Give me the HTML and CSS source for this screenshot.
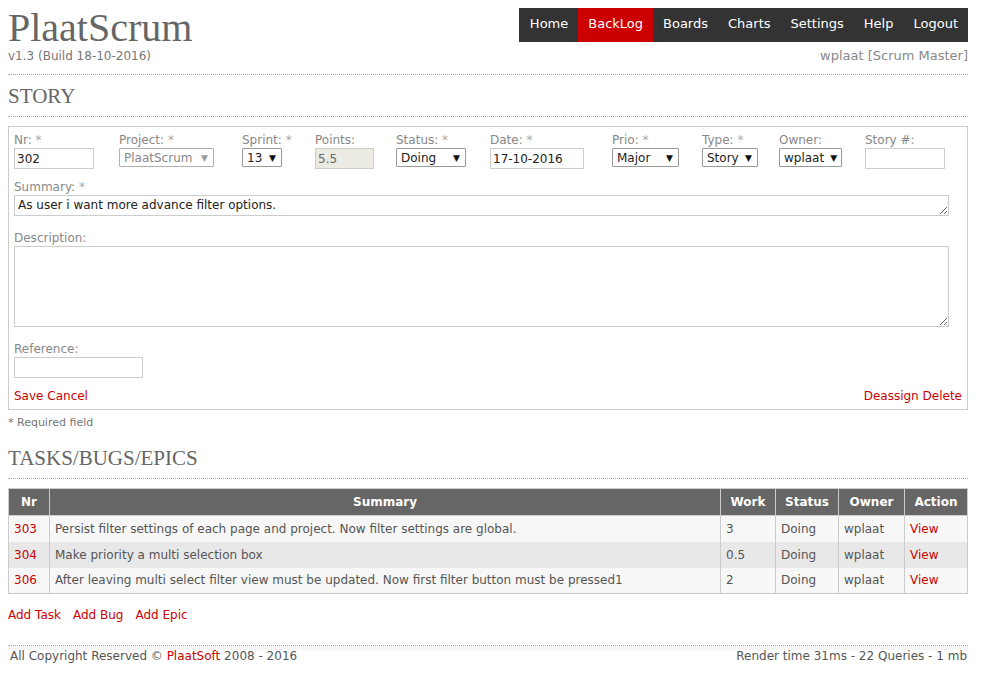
FILE: index.html
```html
<!DOCTYPE html>
<html>
<head>
<meta charset="utf-8">
<title>PlaatScrum</title>
<link rel="stylesheet" href="styles.css">
</head>
<body>
<div class="header">
  <div class="brand">
    <h1 class="title">PlaatScrum</h1>
    <div class="version">v1.3 (Build 18-10-2016)</div>
  </div>
  <div class="right">
    <ul class="nav">
      <li><a href="#">Home</a></li>
      <li class="active"><a href="#">BackLog</a></li>
      <li><a href="#">Boards</a></li>
      <li><a href="#">Charts</a></li>
      <li><a href="#">Settings</a></li>
      <li><a href="#">Help</a></li>
      <li><a href="#">Logout</a></li>
    </ul>
    <div class="user">wplaat [Scrum Master]</div>
  </div>
</div>
<div class="hr hr-top"></div>
<h2 class="section">STORY</h2>
<div class="hr"></div>

<div class="box">
  <div class="fields">
    <div class="field w-nr"><label>Nr: <span class="req">*</span></label><input class="in in-nr" value="302"></div>
    <div class="field w-project"><label>Project: <span class="req">*</span></label><span class="sel sel-dis s-project">PlaatScrum<span class="arr">▼</span></span></div>
    <div class="field w-sprint"><label>Sprint: <span class="req">*</span></label><span class="sel s-sprint">13<span class="arr">▼</span></span></div>
    <div class="field w-points"><label>Points:</label><input class="in in-points" value="5.5" disabled></div>
    <div class="field w-status"><label>Status: <span class="req">*</span></label><span class="sel s-status">Doing<span class="arr">▼</span></span></div>
    <div class="field w-date"><label>Date: <span class="req">*</span></label><input class="in in-date" value="17-10-2016"></div>
    <div class="field w-prio"><label>Prio: <span class="req">*</span></label><span class="sel s-prio">Major<span class="arr">▼</span></span></div>
    <div class="field w-type"><label>Type: <span class="req">*</span></label><span class="sel s-type">Story<span class="arr">▼</span></span></div>
    <div class="field w-owner"><label>Owner:</label><span class="sel s-owner">wplaat<span class="arr">▼</span></span></div>
    <div class="field w-story"><label>Story #:</label><input class="in in-story" value=""></div>
  </div>
  <div class="block">
    <label>Summary: <span class="req">*</span></label>
    <textarea class="in ta-summary">As user i want more advance filter options.</textarea>
  </div>
  <div class="block after-ta">
    <label>Description:</label>
    <textarea class="in ta-desc"></textarea>
  </div>
  <div class="block after-ta">
    <label>Reference:</label>
    <input class="in in-ref" value="">
  </div>
  <div class="actions">
    <div><a href="#">Save</a> <a href="#">Cancel</a></div>
    <div><a href="#">Deassign</a> <a href="#">Delete</a></div>
  </div>
</div>
<div class="note">* Required field</div>

<h2 class="section sec2">TASKS/BUGS/EPICS</h2>
<div class="hr"></div>

<table class="grid">
  <thead>
    <tr><th class="c-nr">Nr</th><th>Summary</th><th class="c-work">Work</th><th class="c-status">Status</th><th class="c-owner">Owner</th><th class="c-action">Action</th></tr>
  </thead>
  <tbody>
    <tr class="odd"><td><a href="#">303</a></td><td>Persist filter settings of each page and project. Now filter settings are global.</td><td>3</td><td>Doing</td><td>wplaat</td><td><a href="#">View</a></td></tr>
    <tr class="even"><td><a href="#">304</a></td><td>Make priority a multi selection box</td><td>0.5</td><td>Doing</td><td>wplaat</td><td><a href="#">View</a></td></tr>
    <tr class="odd"><td><a href="#">306</a></td><td>After leaving multi select filter view must be updated. Now first filter button must be pressed1</td><td>2</td><td>Doing</td><td>wplaat</td><td><a href="#">View</a></td></tr>
  </tbody>
</table>

<div class="adds"><a href="#">Add Task</a><a href="#">Add Bug</a><a href="#">Add Epic</a></div>

<div class="hr hr-foot"></div>
<div class="footer">
  <div>All Copyright Reserved © <a href="#">PlaatSoft</a> 2008 - 2016</div>
  <div>Render time 31ms - 22 Queries - 1 mb</div>
</div>
</body>
</html>
```

FILE: styles.css
```css
* { box-sizing: border-box; }
body {
  margin: 8px 16px 8px 8px;
  font-family: "DejaVu Sans", Verdana, sans-serif;
  font-size: 12px;
  color: #555;
  background: #fff;
}
a { color: #cc0000; text-decoration: none; }

.header { display: flex; justify-content: space-between; align-items: flex-start; }
.title {
  margin: 0;
  font-family: "Liberation Serif", Georgia, serif;
  font-weight: normal;
  font-size: 40px;
  line-height: 40px;
  color: #666;
}
.version { font-size: 12px; color: #777; margin-top: 1px; }
.right { display: flex; flex-direction: column; align-items: flex-end; margin-top: -2px; }
.nav { list-style: none; margin: 0; padding: 0; display: flex; background: #333; }
.nav li a {
  display: block;
  padding: 0 10px;
  line-height: 36px;
  color: #fff;
  font-size: 13px;
}
.nav li:first-child a { padding-left: 11px; }
.nav li.active a { background: #cc0000; }
.user { color: #888; font-size: 13px; margin-top: 6px; }

.hr { border-top: 1px dotted #aaa; height: 0; margin-top: 9px; }
.hr-top { margin-top: 11px; }
.section {
  margin: 9px 0 8px 0;
  font-family: "Liberation Serif", Georgia, serif;
  font-weight: normal;
  font-size: 21px;
  line-height: 24px;
  color: #666;
}
.sec2 { margin-top: 17px; }
.section + .hr { margin-top: 0; }

.box { border: 1px solid #ccc; margin-top: 9px; padding: 5px 5px 5px 5px; }
label { display: block; color: #888; font-size: 12px; line-height: 16px; }
.req { color: #aaa; }
.fields { display: flex; }
.field { flex: none; }
.w-nr { width: 105px; }
.w-project { width: 123px; }
.w-sprint { width: 73px; }
.w-points { width: 81px; }
.w-status { width: 94px; }
.w-date { width: 122px; }
.w-prio { width: 90px; }
.w-type { width: 77px; }
.w-owner { width: 86px; }

.in {
  display: block;
  border: 1px solid #ccc;
  font-family: "DejaVu Sans", Verdana, sans-serif;
  font-size: 12px;
  color: #222;
  padding: 1px 2px;
  height: 21px;
  background: #fff;
  margin: 0;
  outline: none;
}
.in-nr { width: 80px; }
.in-points { width: 59px; background: #ebebe4; color: #666; }
.in-date { width: 94px; }
.in-story { width: 80px; }
.in-ref { width: 129px; }

.sel {
  display: flex;
  justify-content: space-between;
  align-items: center;
  height: 19px;
  border: 1px solid #999;
  padding: 0 5px 0 4px;
  color: #222;
  font-size: 12px;
  border-radius: 1px;
}
.sel .arr { font-size: 9px; margin-left: 6px; color: #111; }
.sel-dis { border-color: #b0b0b0; color: #888; }
.sel-dis .arr { color: #999; }
.s-project { width: 95px; }
.s-sprint { width: 40px; }
.s-status { width: 70px; }
.s-prio { width: 67px; }
.s-type { width: 56px; }
.s-owner { width: 63px; }

.block { margin-top: 10px; }
.block.after-ta { margin-top: 14px; }
textarea.in { width: 935px; resize: vertical; font-size: 12px; line-height: 16px; }
.ta-summary { height: 21px; padding: 1px 3px; overflow: hidden; }
.ta-desc { height: 81px; }

.actions { display: flex; justify-content: space-between; margin-top: 10px; line-height: 16px; }

.note { font-size: 11px; color: #777; margin-top: 6px; }

.grid {
  width: 100%;
  border-collapse: collapse;
  margin-top: 9px;
  border: 1px solid #ccc;
}
.grid th {
  background: #666;
  color: #fff;
  font-weight: bold;
  height: 27px;
  border: 1px solid #ccc;
  padding: 0 5px;
  text-align: center;
}
.grid td {
  border-left: 1px solid #ccc;
  border-right: 1px solid #ccc;
  height: 26px;
  padding: 0 5px;
  color: #555;
}
.grid tr.odd td { background: #f7f7f7; }
.grid tr.even td { background: #e8e8e8; }
.c-nr { width: 41px; }
.c-work { width: 55px; }
.c-status { width: 63px; }
.c-owner { width: 66px; }
.c-action { width: 63px; }

.adds { margin-top: 14px; display: flex; gap: 12px; }

.hr-foot { margin-top: 23px; }
.footer {
  display: flex;
  justify-content: space-between;
  background: linear-gradient(#f5f5f5 0, #f5f5f5 4px, #fff 4px);
  padding: 3px 1px 0 2px;
  color: #555;
  font-size: 12px;
}
```
